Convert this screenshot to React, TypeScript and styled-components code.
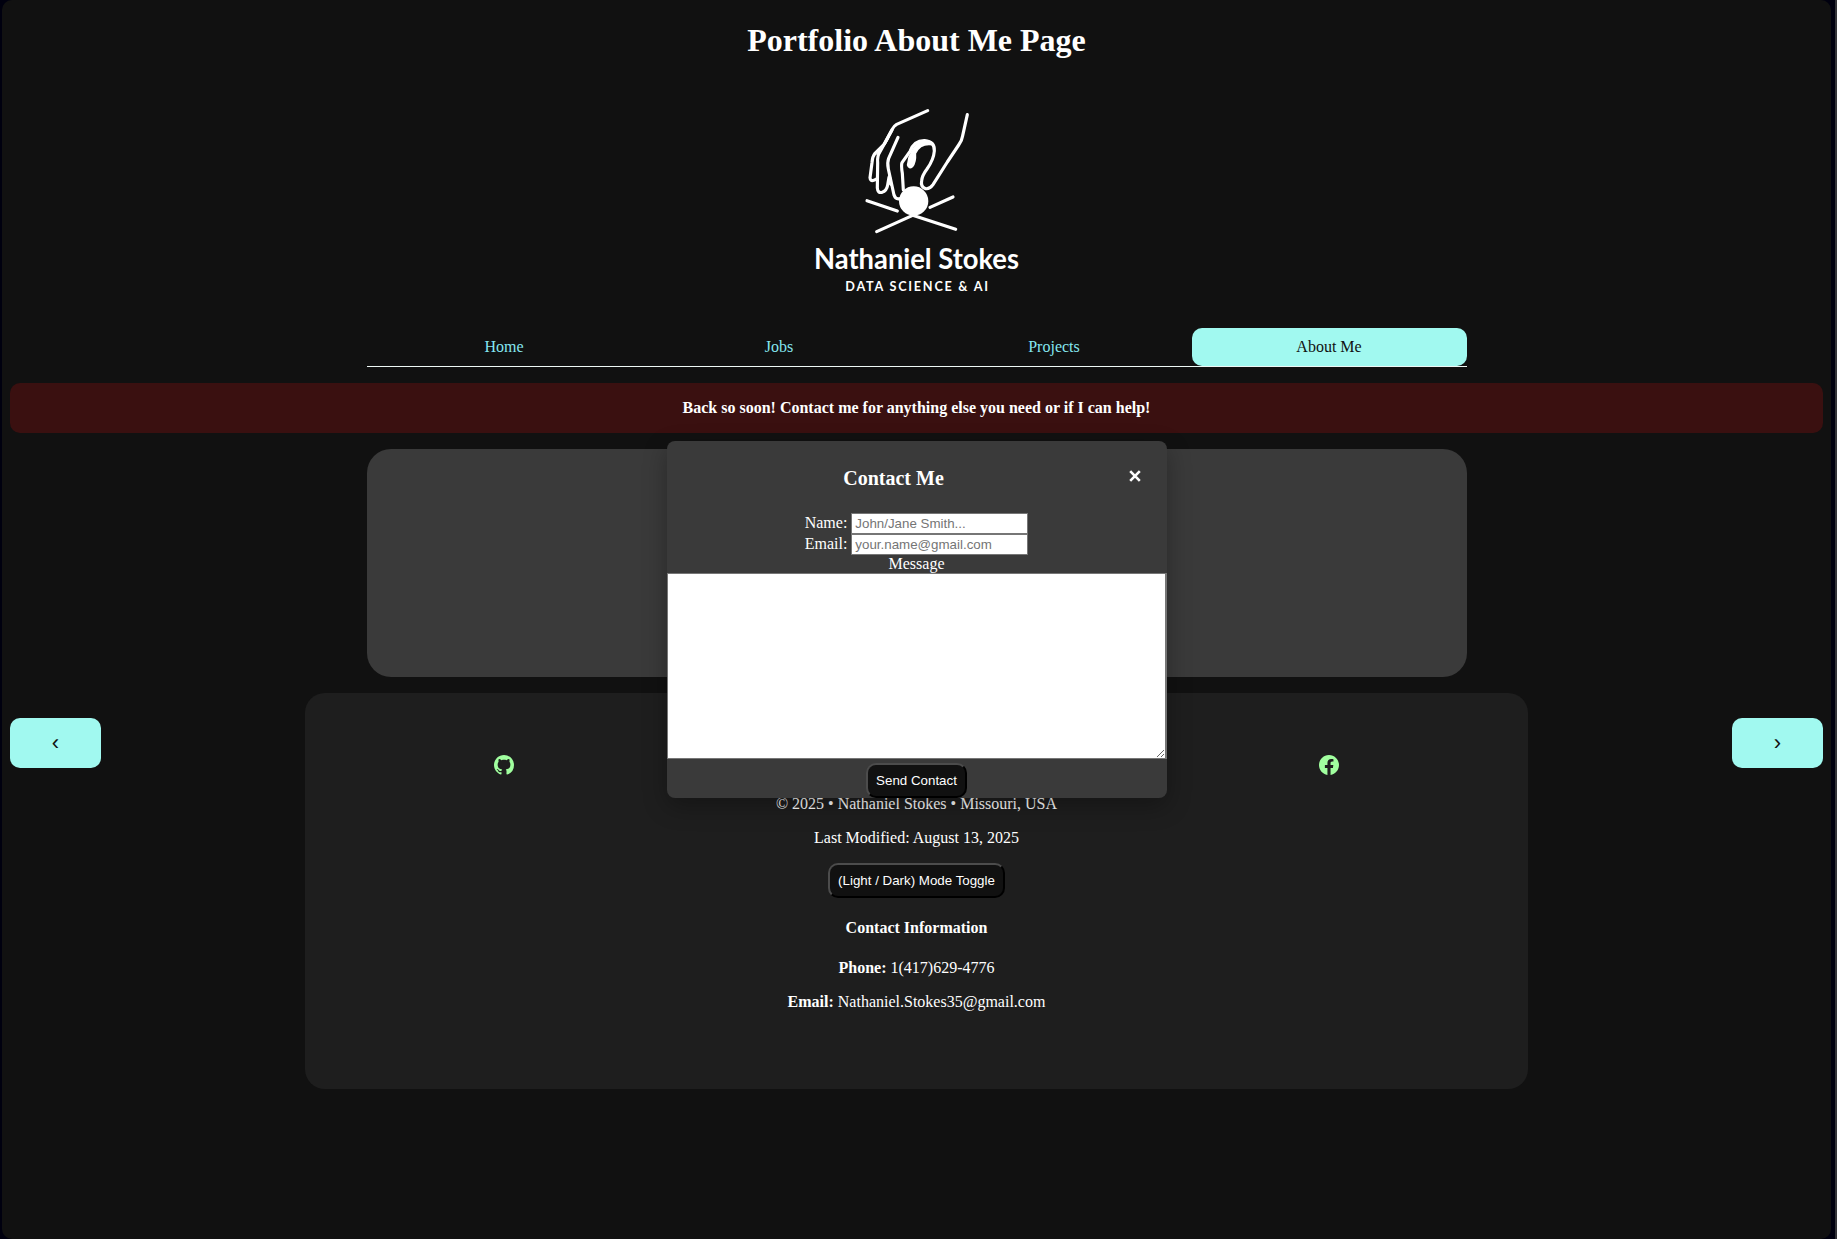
import React from "react";
import styled, { createGlobalStyle } from "styled-components";
import { BsGithub, BsFacebook } from "react-icons/bs";

const Global = createGlobalStyle`
  body { margin: 0; background: #00000f; color: #fff; font: 16px/18.4px "Liberation Serif", "Times New Roman", serif; }
  * { box-sizing: border-box; }
`;

const Frame = styled.div`
  height: 1239px;
  padding-left: 2px;
  padding-right: 4px;
  border-right: 2px solid #333338;
  overflow: hidden;
`;

const Page = styled.div`
  position: relative;
  height: 1239px;
  padding: 0 8px;
  background: #111;
  border-radius: 10px;
  display: flex;
  flex-direction: column;
  align-items: center;
`;

const Title = styled.h1`
  margin: 22px 0 12px;
  font-size: 32px;
  line-height: 37px;
`;

const Logo = styled.svg`
  width: 240px;
  height: 220px;
  margin: 19px 0 18px;
  flex: none;
`;

const Nav = styled.nav`
  width: 1100px;
  height: 39px;
  display: grid;
  grid-template-columns: repeat(4, 1fr);
  border-bottom: 1px solid #eef8f5;
`;

const Tab = styled.a<{ $active?: boolean }>`
  display: flex;
  align-items: center;
  justify-content: center;
  border-radius: 10px;
  color: ${(p) => (p.$active ? "#111" : "#85e7f0")};
  background: ${(p) => (p.$active ? "#a1f9f0" : "transparent")};
`;

const Banner = styled.div`
  align-self: stretch;
  height: 50px;
  margin: 16px 0;
  display: flex;
  align-items: center;
  justify-content: center;
  border-radius: 10px;
  background: #3a1010;
  font-weight: bold;
`;

const Panel = styled.main`
  width: 1100px;
  height: 228px;
  border-radius: 24px;
  background: #3a3a3a;
`;

const Footer = styled.footer`
  width: 1223px;
  height: 396px;
  margin-top: 16px;
  padding-top: 62px;
  border-radius: 20px;
  background: #1e1e1e;
  display: flex;
  flex-direction: column;
  align-items: center;
`;

const Socials = styled.div`
  width: 845px;
  display: flex;
  justify-content: space-between;
  color: #a1ff9f;
  margin-bottom: 20px;
  svg { display: block; }
`;

const Line = styled.p`
  margin: 0 0 16px;
`;

const Modified = styled(Line)`
  margin-bottom: 15.2px;
`;

const Heading = styled.h4`
  margin: 21.3px 0;
`;

const Button = styled.button`
  padding: 8px;
  height: 35px;
  border: 2px outset #000;
  border-color: #4c4c4c #000 #000 #4c4c4c;
  border-radius: 10px;
  background: #111;
  color: #fff;
  font: 13.333px/15px "Liberation Sans", Arial, sans-serif;
`;

const Arrow = styled.button<{ $side: "left" | "right" }>`
  position: absolute;
  top: 718px;
  ${(p) => p.$side}: 8px;
  width: 91px;
  height: 50px;
  padding: 0;
  border: 0;
  border-radius: 10px;
  background: #a1f9f0;
  color: #111;
  font: 22px "Liberation Sans", Arial, sans-serif;
`;

const Dialog = styled.section`
  position: absolute;
  top: 441px;
  left: 665px;
  width: 500px;
  height: 357px;
  border-radius: 8px;
  background: #3a3a3a;
  box-shadow: 0 8px 24px rgba(0, 0, 0, 0.3);
  display: flex;
  flex-direction: column;
`;

const DialogHead = styled.header`
  height: 72px;
  padding: 2px 17px 0 0;
  display: flex;
  align-items: center;
`;

const DialogTitle = styled.h3`
  flex: 1;
  margin: 0;
  text-align: center;
  font-size: 20px;
`;

const Close = styled.button`
  width: 30px;
  padding: 0 0 4px;
  border: 0;
  background: none;
  color: #fff;
  svg { display: block; margin: auto; }
`;

const Form = styled.form`
  display: flex;
  flex-direction: column;
  align-items: center;
  width: 499px;
`;

const Field = styled.label`
  display: flex;
  align-items: center;
  gap: 4px;
`;

const Input = styled.input`
  width: 177px;
  height: 21px;
  padding: 1px 3px;
  border: 1px solid #767676;
  border-radius: 0;
  background: #fff;
  font: 13.333px "Liberation Sans", Arial, sans-serif;
  &::placeholder { color: #757575; }
`;

const Message = styled.textarea`
  align-self: flex-start;
  width: 500px;
  height: 186px;
  margin-bottom: 4px;
  border: 1px solid #767676;
  border-right-width: 2px;
  background: #fff;
  flex: none;
`;

export default function App() {
  return (
    <Frame>
      <Global />
      <Page>
        <Title>Portfolio About Me Page</Title>
        <Logo viewBox="-9 0 720 660" fill="none" stroke="#fff" strokeWidth="9.5" strokeLinecap="round" strokeLinejoin="round">
          <path d="M383 62 L290 103 Q281 108 276 119 L253 162 L225 190 Q217 200 216 218 L210 263 Q211 275 221 271 L230 267" />
          <path d="M276 120 L240 185 Q231 199 233 218 L232 294 Q233 310 246 307 Q260 303 263 285 L267 262" />
          <path d="M294 142 L266 205 Q261 219 265 237 L282 315 Q287 329 299 326" />
          <path d="M502 74 L488 137 Q486 151 476 165 L442 216 L399 284 Q389 298 377 296 Q361 291 365 272 Q366 257 381 237 Q401 209 403 183 Q405 155 374 152 Q343 151 330 184 L306 218 Q303 226 307 250 L310 300" />
          <path d="M333 190 Q346 157 376 153 Q391 151 398 164 Q361 158 346 190 Q348 217 337 230 Q327 238 323 225 L327 203Z" fill="#fff" strokeWidth="5" />
          <path d="M252 164 L276 120 L264 150 L240 186 L230 193Z M266 245 L273 264 L273 287 L266 282Z" fill="#fff" strokeWidth="2" />
          <circle cx="341" cy="333" r="44" fill="#fff" stroke="none" />
          <path d="M201 332 L292 363 M390 352 L459 321 M230 425 L338 376 L467 418" />
          <g fill="#fff" stroke="none" fontFamily="Lato, sans-serif" fontWeight="bold">
            <text x="42" y="538" fontSize="84" textLength="615" lengthAdjust="spacingAndGlyphs">Nathaniel Stokes</text>
            <text x="136" y="602" fontSize="38" textLength="428">DATA SCIENCE &amp; AI</text>
          </g>
        </Logo>
        <Nav>
          <Tab>Home</Tab>
          <Tab>Jobs</Tab>
          <Tab>Projects</Tab>
          <Tab $active>About Me</Tab>
        </Nav>
        <Banner>Back so soon! Contact me for anything else you need or if I can help!</Banner>
        <Panel />
        <Footer>
          <Socials>
            <BsGithub size={20} />
            <BsFacebook size={20} />
          </Socials>
          <Line>© 2025 • Nathaniel Stokes • Missouri, USA</Line>
          <Modified>Last Modified: August 13, 2025</Modified>
          <Button>(Light / Dark) Mode Toggle</Button>
          <Heading>Contact Information</Heading>
          <Line><b>Phone:</b> 1(417)629-4776</Line>
          <Line><b>Email:</b> Nathaniel.Stokes35@gmail.com</Line>
        </Footer>
        <Arrow $side="left">‹</Arrow>
        <Arrow $side="right">›</Arrow>
        <Dialog>
          <DialogHead>
            <DialogTitle>Contact Me</DialogTitle>
            <Close aria-label="Close">
              <svg width="12" height="12" viewBox="0 0 12 12" stroke="#fff" strokeWidth="2.6">
                <path d="M1.2 1.2 L10.8 10.8 M10.8 1.2 L1.2 10.8" />
              </svg>
            </Close>
          </DialogHead>
          <Form>
            <Field>Name: <Input placeholder="John/Jane Smith..." /></Field>
            <Field>Email: <Input placeholder="your.name@gmail.com" /></Field>
            <span>Message</span>
            <Message />
            <Button type="button">Send Contact</Button>
          </Form>
        </Dialog>
      </Page>
    </Frame>
  );
}
